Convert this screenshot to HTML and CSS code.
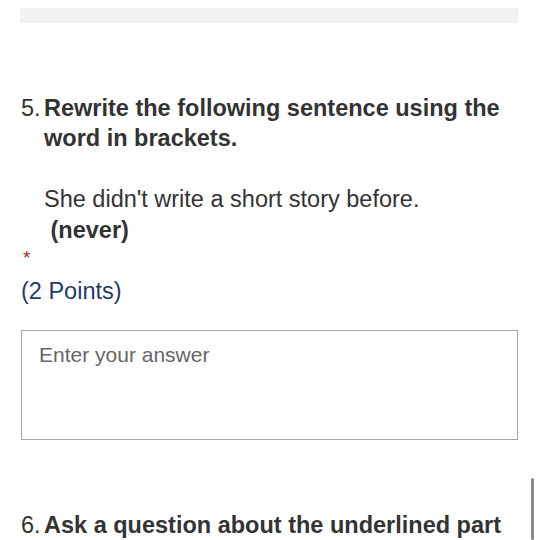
FILE: index.html
```html
<!DOCTYPE html>
<html>
<head>
<meta charset="utf-8">
<link rel="stylesheet" href="styles.css">
</head>
<body>
<div class="page">
  <div class="topbar"></div>
  <div class="question q5">
    <div class="qhead">
      <span class="num">5.</span>
      <div class="qtext">
        <div class="title">Rewrite the following sentence using the word in brackets.</div>
        <div class="prompt">She didn't write a short story before.<br>&nbsp;<b>(never)</b></div>
      </div>
    </div>
    <div class="req">*</div>
    <div class="points">(2 Points)</div>
    <div class="answer">Enter your answer</div>
  </div>
  <div class="question q6">
    <div class="qhead">
      <span class="num">6.</span>
      <div class="qtext">
        <div class="title">Ask a question about the underlined part</div>
      </div>
    </div>
  </div>
  <div class="scroll"></div>
</div>
</body>
</html>
```
FILE: styles.css
```css
html, body {
  margin: 0;
  padding: 0;
  background: #fff;
}
body {
  font-family: "Liberation Sans", Arial, sans-serif;
  color: #333;
  overflow: hidden;
}
.page {
  position: relative;
  width: 539px;
  height: 540px;
  padding: 8px 20px 0 21px;
  box-sizing: border-box;
}
.topbar {
  height: 15px;
  background: #f2f2f2;
  width: 498px;
  margin-left: -1px;
}
.question {
  font-size: 23.5px;
  line-height: 30px;
}
.q5 {
  margin-top: 70px;
}
.qhead {
  display: flex;
}
.num {
  width: 23px;
  flex: none;
}
.title {
  font-weight: bold;
}
.prompt {
  margin-top: 31px;
  line-height: 31px;
}
.req {
  color: #a4262c;
  font-size: 19px;
  line-height: 20px;
  margin-top: 2px;
  padding-left: 2px;
}
.points {
  color: #1f3a68;
  margin-top: 8px;
  line-height: 30px;
}
.answer {
  margin-top: 24px;
  border: 1px solid #a6a6a6;
  box-sizing: border-box;
  width: 497px;
  height: 110px;
  padding: 9px 17px;
  color: #666;
  font-size: 21px;
  line-height: 30px;
}
.q6 {
  margin-top: 70px;
}
.scroll {
  position: absolute;
  left: 531px;
  top: 478px;
  width: 3px;
  height: 62px;
  background: #8a8a8a;
  border-radius: 2px;
}
```
